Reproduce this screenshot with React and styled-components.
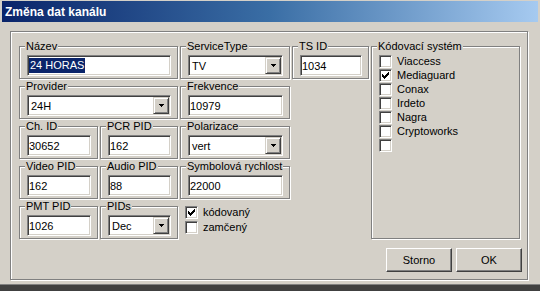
import React from "react";
import styled, { createGlobalStyle } from "styled-components";

const Global = createGlobalStyle`
  html, body { margin: 0; padding: 0; background: #d4d0c8; }
  body { font-family: "Liberation Sans", Arial, sans-serif; font-size: 11px; color: #000; }
  * { box-sizing: border-box; }
`;

const Window = styled.div`
  width: 540px;
  height: 291px;
  background: #d4d0c8;
  display: flex;
  flex-direction: column;
  padding: 1px 2px 0 2px;
  overflow: hidden;
  border-bottom: 6px solid #404040;
  box-shadow: inset 0 -1px #808080;
`;

const TitleBar = styled.div`
  height: 21px;
  flex: none;
  background: linear-gradient(to right, #0a246a 0%, #3a6ea5 50%, #a6caf0 100%);
  color: #fff;
  font-weight: bold;
  font-size: 12px;
  display: flex;
  align-items: center;
  padding-left: 3px;
`;

const Body = styled.div`
  flex: 1;
  padding: 9px 10px 0 8px;
  display: flex;
  flex-direction: column;
`;

const Panel = styled.div`
  border: 1px solid #808080;
  box-shadow: inset 1px 1px #fff, 1px 1px #fff;
  padding: 8px 5px 7px 8px;
  display: flex;
  flex-direction: column;
  gap: 8px;
`;

const Grid = styled.div`
  display: grid;
  grid-template-columns: 79px 78px 110px 77px 149px;
  grid-template-rows: repeat(5, 40px);
  column-gap: 2px;
  grid-template-areas:
    "name name type ts cas"
    "prov prov freq . cas"
    "chid pcr pol . cas"
    "vid aud sym . cas"
    "pmt pids flags . cas";
`;

const Group = styled.fieldset`
  grid-area: ${(p) => p.$area};
  align-self: start;
  margin: 0;
  min-width: 0;
  height: ${(p) => (p.$tall ? "199px" : "auto")};
  padding: 2px 6px 2px 7px;
  border: 1px solid #808080;
  box-shadow: inset 1px 1px #fff, 1px 1px #fff;
  display: flex;
  flex-direction: column;
  gap: 1px;
`;

const Legend = styled.legend`
  padding: 0 1px;
  margin-left: -2px;
  font-size: 11px;
  line-height: 13px;
  white-space: nowrap;
  max-width: none;
  background: #d4d0c8;
`;

const Field = styled.div`
  height: 21px;
  width: 100%;
  background: #fff;
  border: 1px solid;
  border-color: #808080 #fff #fff #808080;
  box-shadow: inset 1px 1px #404040, inset -1px -1px #d4d0c8;
  display: flex;
  align-items: center;
  padding: 0 ${(p) => (p.$combo ? "1px" : "2px")} 0 ${(p) => (p.$combo ? "3px" : "1px")};
  white-space: nowrap;
  overflow: hidden;
`;

const Selected = styled.span`
  background: #0a246a;
  color: #fff;
  line-height: 15px;
  padding: 0 1px;
`;

const DropButton = styled.span`
  margin-left: auto;
  width: 16px;
  height: 17px;
  flex: none;
  background: #d4d0c8;
  border: 1px solid;
  border-color: #d4d0c8 #404040 #404040 #d4d0c8;
  box-shadow: inset 1px 1px #fff, inset -1px -1px #808080;
  display: flex;
  align-items: center;
  justify-content: center;
`;

const CheckList = styled.div`
  display: flex;
  flex-direction: column;
  gap: 1px;
`;

const Flags = styled.div`
  grid-area: flags;
  padding: 6px 0 0 5px;
  display: flex;
  flex-direction: column;
  gap: 2px;
`;

const CheckRow = styled.label`
  display: flex;
  align-items: center;
  gap: 5px;
  height: 13px;
  line-height: 13px;
  white-space: nowrap;
`;

const Box = styled.span`
  width: 13px;
  height: 13px;
  flex: none;
  background: #fff;
  border: 1px solid;
  border-color: #808080 #fff #fff #808080;
  box-shadow: inset 1px 1px #404040, inset -1px -1px #d4d0c8;
  display: block;
`;

const Buttons = styled.div`
  display: flex;
  justify-content: flex-end;
  gap: 4px;
`;

const Button = styled.button`
  width: 66px;
  height: 24px;
  padding: 0;
  font-family: "Liberation Sans", Arial, sans-serif;
  font-size: 11px;
  color: #000;
  background: #d4d0c8;
  border: 1px solid;
  border-color: #fff #404040 #404040 #fff;
  box-shadow: inset -1px -1px #808080, inset 1px 1px #d4d0c8;
`;

const Arrow = () => (
  <svg width="5" height="3" viewBox="0 0 5 3" shapeRendering="crispEdges">
    <path d="M0 0h5v1h-1v1h-1v1h-1v-1h-1v-1h-1z" fill="#000" />
  </svg>
);

const CheckMark = styled.svg`
  display: block;
`;

const Check = ({ checked, label }) => (
  <CheckRow>
    <Box>
      {checked && (
        <CheckMark width="11" height="11" viewBox="0 0 11 11" shapeRendering="crispEdges">
          <path d="M2 4h1v1h1v1h1v-1h1v-1h1v-1h1v-1h1v3h-1v1h-1v1h-1v1h-1v1h-1v-1h-1v-1h-1z" fill="#000" />
        </CheckMark>
      )}
    </Box>
    {label}
  </CheckRow>
);

const TextGroup = ({ area, label, value }) => (
  <Group $area={area}>
    <Legend>{label}</Legend>
    <Field>{value}</Field>
  </Group>
);

const ComboGroup = ({ area, label, value }) => (
  <Group $area={area}>
    <Legend>{label}</Legend>
    <Field $combo>
      {value}
      <DropButton>
        <Arrow />
      </DropButton>
    </Field>
  </Group>
);

const systems = [
  ["Viaccess", false],
  ["Mediaguard", true],
  ["Conax", false],
  ["Irdeto", false],
  ["Nagra", false],
  ["Cryptoworks", false],
  ["", false],
];

export default function App() {
  return (
    <>
      <Global />
      <Window>
        <TitleBar>Změna dat kanálu</TitleBar>
        <Body>
          <Panel>
            <Grid>
              <Group $area="name">
                <Legend>Název</Legend>
                <Field>
                  <Selected>24 HORAS</Selected>
                </Field>
              </Group>
              <ComboGroup area="type" label="ServiceType" value="TV" />
              <TextGroup area="ts" label="TS ID" value="1034" />
              <Group $area="cas" $tall>
                <Legend>Kódovací systém</Legend>
                <CheckList>
                  {systems.map(([name, on], i) => (
                    <Check key={i} label={name} checked={on} />
                  ))}
                </CheckList>
              </Group>
              <ComboGroup area="prov" label="Provider" value="24H" />
              <TextGroup area="freq" label="Frekvence" value="10979" />
              <TextGroup area="chid" label="Ch. ID" value="30652" />
              <TextGroup area="pcr" label="PCR PID" value="162" />
              <ComboGroup area="pol" label="Polarizace" value="vert" />
              <TextGroup area="vid" label="Video PID" value="162" />
              <TextGroup area="aud" label="Audio PID" value="88" />
              <TextGroup area="sym" label="Symbolová rychlost" value="22000" />
              <TextGroup area="pmt" label="PMT PID" value="1026" />
              <ComboGroup area="pids" label="PIDs" value="Dec" />
              <Flags>
                <Check label="kódovaný" checked />
                <Check label="zamčený" />
              </Flags>
            </Grid>
            <Buttons>
              <Button>Storno</Button>
              <Button>OK</Button>
            </Buttons>
          </Panel>
        </Body>
      </Window>
    </>
  );
}
